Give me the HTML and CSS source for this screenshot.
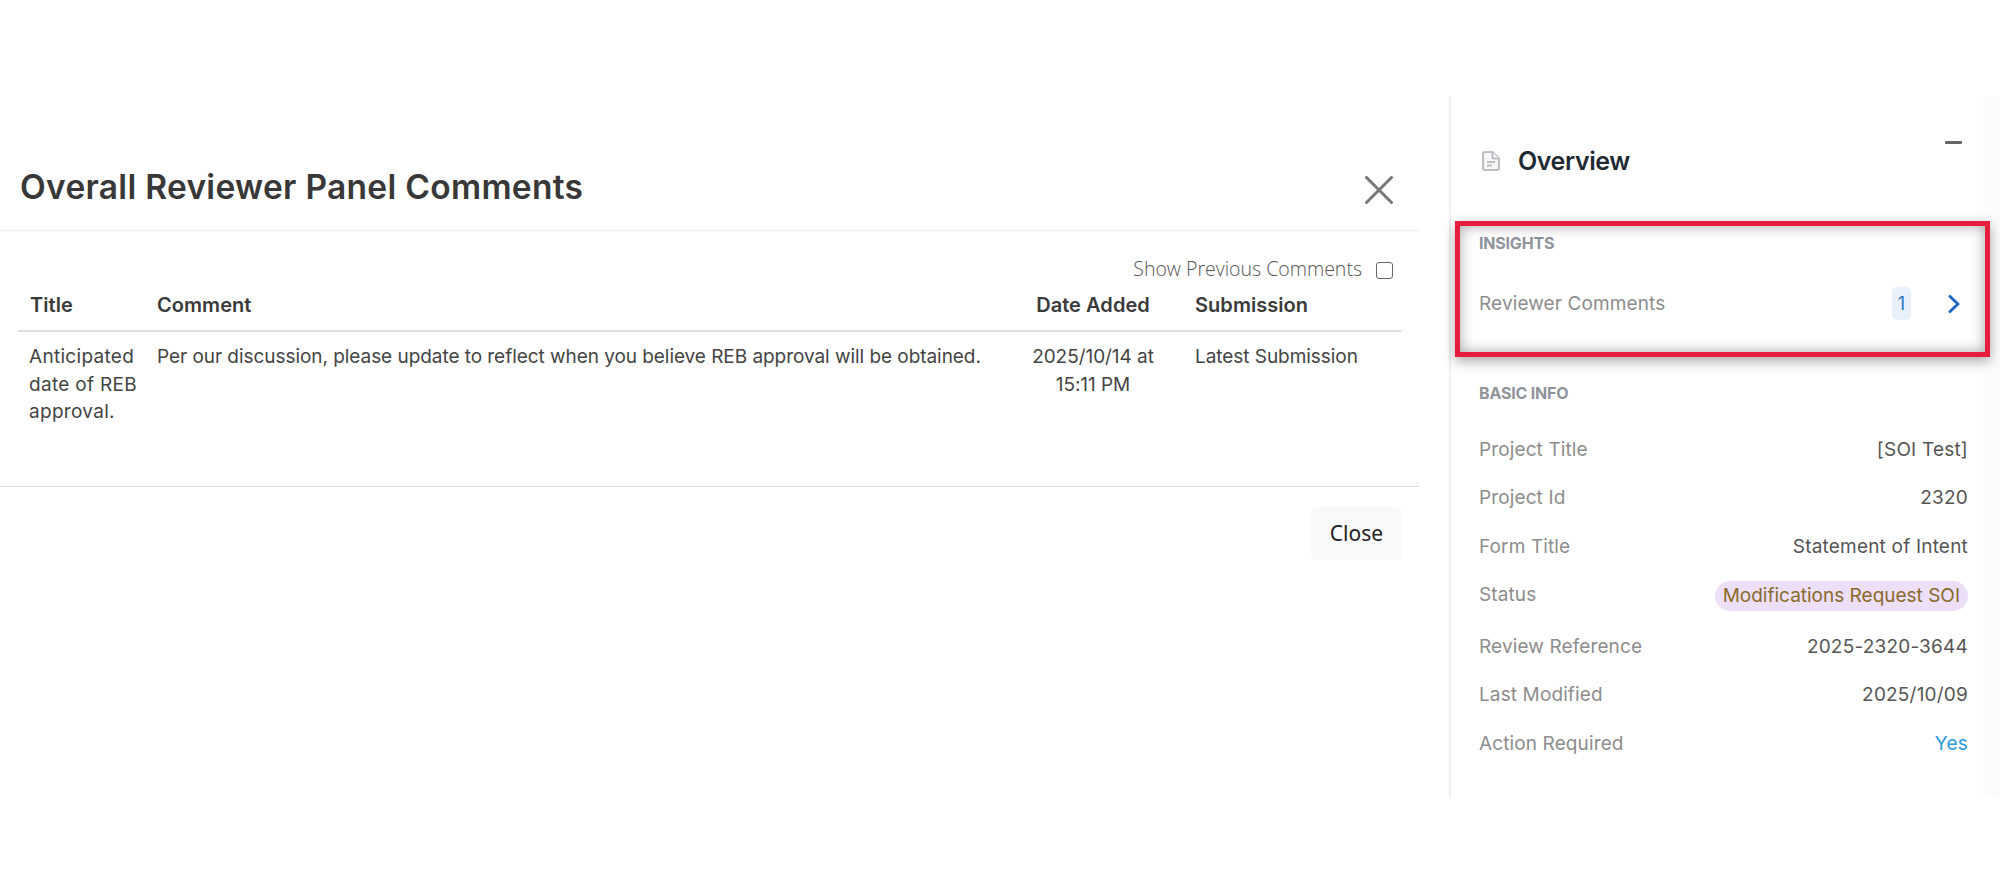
FILE: index.html
```html
<!DOCTYPE html>
<html lang="en">
<head>
<meta charset="utf-8">
<title>Overall Reviewer Panel Comments</title>
<link rel="stylesheet" href="styles.css">
</head>
<body>
<div class="page">
  <main class="modal">
    <header class="modal-head">
      <h1 class="modal-title">Overall Reviewer Panel Comments</h1>
      <svg class="close-x" viewBox="0 0 28 28" aria-hidden="true"><path d="M1.5 1.5 26.5 26.5M26.5 1.5 1.5 26.5"/></svg>
    </header>
    <div class="toggle-row">
      <span class="toggle-label">Show Previous Comments</span>
      <span class="checkbox"></span>
    </div>
    <table class="comments">
      <thead>
        <tr>
          <th class="col-title">Title</th>
          <th class="col-comment">Comment</th>
          <th class="col-date">Date Added</th>
          <th class="col-sub">Submission</th>
        </tr>
      </thead>
      <tbody>
        <tr>
          <td class="cell-title">Anticipated<br>date of REB<br>approval.</td>
          <td>Per our discussion, please update to reflect when you believe REB approval will be obtained.</td>
          <td class="col-date">2025/10/14 at<br>15:11 PM</td>
          <td>Latest Submission</td>
        </tr>
      </tbody>
    </table>
    <footer class="modal-foot">
      <button class="close-btn" type="button">Close</button>
    </footer>
  </main>
  <aside class="panel">
    <header class="panel-head">
      <div class="panel-title">
        <svg class="doc-icon" viewBox="0 0 18 20" aria-hidden="true"><path d="M3 1h7.5L17 7.5V17a2 2 0 0 1-2 2H3a2 2 0 0 1-2-2V3a2 2 0 0 1 2-2Z"/><path d="M10.500 1v5a1.500 1.500 0 0 0 1.500 1.500h5"/><path d="M5 11h8M5 14.500h5"/></svg>
        <h2 class="panel-heading">Overview</h2>
      </div>
      <span class="minus"></span>
    </header>
    <section class="insights">
      <div class="annotation"></div>
      <h3 class="section-label">INSIGHTS</h3>
      <div class="insight-row">
        <span class="label">Reviewer Comments</span>
        <span class="insight-end">
          <span class="badge">1</span>
          <svg class="chevron" viewBox="0 0 12 18" aria-hidden="true"><path d="M2 1.500 10 9 2 16.500"/></svg>
        </span>
      </div>
    </section>
    <section class="basic">
      <h3 class="section-label">BASIC INFO</h3>
      <dl class="info">
        <div class="info-row"><dt class="label">Project Title</dt><dd class="value">[SOI Test]</dd></div>
        <div class="info-row"><dt class="label">Project Id</dt><dd class="value">2320</dd></div>
        <div class="info-row"><dt class="label">Form Title</dt><dd class="value">Statement of Intent</dd></div>
        <div class="info-row info-row-status"><dt class="label">Status</dt><dd class="value"><span class="pill">Modifications Request SOI</span></dd></div>
        <div class="info-row"><dt class="label">Review Reference</dt><dd class="value">2025-2320-3644</dd></div>
        <div class="info-row"><dt class="label">Last Modified</dt><dd class="value">2025/10/09</dd></div>
        <div class="info-row"><dt class="label">Action Required</dt><dd class="value value-yes">Yes</dd></div>
      </dl>
    </section>
  </aside>
</div>
</body>
</html>
```
FILE: styles.css
```css
* { box-sizing: border-box; }
html, body { margin: 0; padding: 0; background: #fff; }
body { font-family: Inter, "Liberation Sans", sans-serif; color: #444; overflow: hidden; }
.page { display: flex; align-items: flex-start; width: 2000px; height: 889px; padding-top: 96px; }

.modal { width: 1449px; padding-top: 48px; padding-right: 30px; }
.modal-head { display: flex; justify-content: space-between; align-items: center; height: 87px; padding: 0 26px 0 20px; border-bottom: 1px solid #eeeeee; }
.modal-title { margin: 0; font-size: 33.500px; line-height: 44px; font-weight: 600; color: #383838; letter-spacing: 0.3px; }
.close-x { width: 28px; height: 28px; margin-top: 5px; fill: none; stroke: #777; stroke-width: 3; stroke-linecap: round; }

.toggle-row { display: flex; justify-content: flex-end; align-items: center; gap: 14px; height: 74px; padding: 0 26px 0 0; margin-bottom: -14px; }
.toggle-label { font-family: "Open Sans", sans-serif; font-weight: 300; font-size: 19.500px; color: #555; }
.checkbox { width: 17px; height: 17px; margin-top: 4px; border: 1.500px solid #666; border-radius: 3px; background: #fff; }

.comments { margin-left: 18px; width: 1383px; table-layout: fixed; border-collapse: collapse; font-size: 19px; line-height: 27.500px; letter-spacing: -0.05px; }
.comments th { height: 40px; padding: 0 12px 9px; text-align: left; font-size: 20px; font-weight: 600; color: #3a3a3a; border-bottom: 2px solid #dedede; letter-spacing: 0.05px; }
.comments td { padding: 11px 12px 60px; vertical-align: top; }
.comments .cell-title { padding-left: 11px; padding-right: 0; letter-spacing: 0.3px; }
.col-title { width: 127px; }
.col-comment { width: 858px; }
.col-date { width: 180px; }
.comments .col-date { text-align: center; }
.col-sub { width: 218px; }

.modal-foot { display: flex; justify-content: flex-end; padding: 20px 17px 0 0; border-top: 1px solid #dddddd; }
.close-btn { width: 91px; height: 53px; border: 0; border-radius: 6px; background: #f8f9fa; font-family: "Noto Sans", sans-serif; font-size: 21px; color: #222; }

.panel { position: relative; width: 551px; height: 702px; padding: 45px 32px 0 28px; border-left: 2px solid #f0f0f0; background: linear-gradient(to right, #fff 95%, #fcfcfc 98%); }
.panel-head { display: flex; justify-content: space-between; align-items: flex-start; }
.panel-title { display: flex; align-items: center; gap: 18px; margin-top: 4px; padding-left: 3px; }
.doc-icon { width: 18px; height: 20px; fill: #f7f7f8; stroke: #bcc0c5; stroke-width: 2.200; stroke-linejoin: round; }
.panel-heading { margin: 0; font-size: 25px; line-height: 32px; font-weight: 600; color: #1f2a33; letter-spacing: -0.4px; }
.minus { width: 17px; height: 3px; margin-right: 6px; background: #666; border-radius: 1px; }

.section-label { margin: 0; font-size: 16px; line-height: 20px; font-weight: 700; color: #8f949b; letter-spacing: -0.2px; }
.insights { position: relative; margin-top: 56px; padding-bottom: 32px; border-bottom: 1px solid #dddddd; }
.annotation { position: absolute; top: -12px; left: -24px; width: 535px; height: 136px; border: 5px solid #e71d3e; box-shadow: 0 4px 12px rgba(0,0,0,.35), inset 0 0 14px rgba(0,0,0,.35); pointer-events: none; }
.insight-row { display: flex; justify-content: space-between; align-items: center; height: 33px; margin-top: 34px; }
.insight-end { display: flex; align-items: center; gap: 37px; margin-right: 8px; }
.badge { display: flex; align-items: center; justify-content: center; width: 19px; height: 33px; border-radius: 5px; background: #e8f0fb; color: #2f72c4; font-size: 18px; }
.chevron { width: 12px; height: 18px; fill: none; stroke: #1f68c1; stroke-width: 3; stroke-linecap: round; stroke-linejoin: round; }

.label { font-size: 19px; color: #8d8d8d; letter-spacing: 0.12px; }
.basic { margin-top: 30px; }
.info { margin: 22px 0 0; }
.info-row { display: flex; justify-content: space-between; align-items: center; height: 48.500px; }
.info-row-status { margin-bottom: 3px; }
.value { margin: 0; font-size: 19px; color: #555; letter-spacing: 0.2px; }
.value-yes { color: #2a9bdc; }
.pill { display: block; height: 30px; margin-top: 2px; padding: 0 8px; border-radius: 15px; background: #ecdff7; color: #8a6a2b; line-height: 30px; letter-spacing: 0; }
```
